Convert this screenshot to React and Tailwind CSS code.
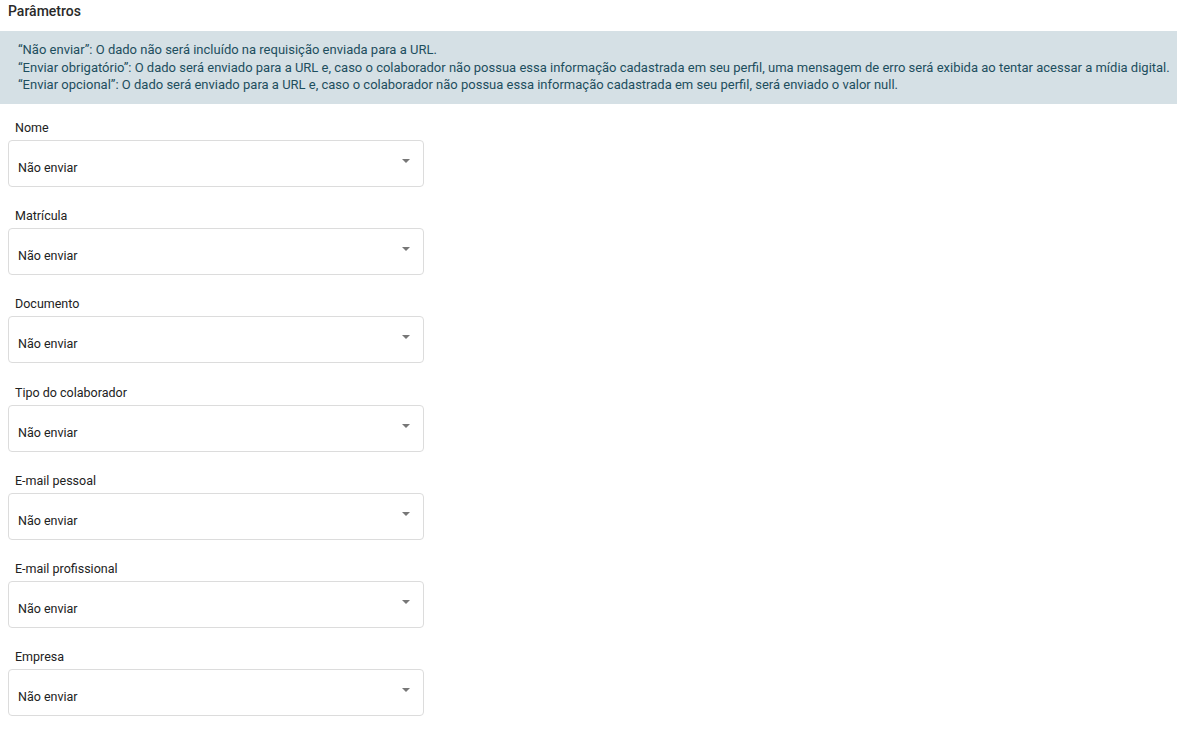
import React from "react";

const fields = [
  "Nome",
  "Matrícula",
  "Documento",
  "Tipo do colaborador",
  "E-mail pessoal",
  "E-mail profissional",
  "Empresa",
];

function Select() {
  return (
    <div className="relative w-[416px] h-[47px] ml-[8px] border border-[#dcdcdc] rounded-[4px] bg-white">
      <span className="absolute left-[9px] top-[18px] text-[12.5px] leading-[17px] text-[#222]">Não enviar</span>
      <svg className="absolute left-[393px] top-[18px]" width="8" height="4" viewBox="0 0 8 4">
        <path d="M0 0 L8 0 L4 4 Z" fill="#777" />
      </svg>
    </div>
  );
}

export default function App() {
  return (
    <div className="w-[1177px] bg-white" style={{ fontFamily: "Roboto, 'Liberation Sans', sans-serif" }}>
      <div className="pl-[8px] pt-[2px] h-[31px] text-[14px] leading-[18px] font-medium text-[#2a2a2a]">Parâmetros</div>
      <div className="bg-[#d5e0e5] h-[73px] pl-[18px] pt-[10px] text-[13px] leading-[17.5px] text-[#1d4e5e]">
        <div>“Não enviar”: O dado não será incluído na requisição enviada para a URL.</div>
        <div>“Enviar obrigatório”: O dado será enviado para a URL e, caso o colaborador não possua essa informação cadastrada em seu perfil, uma mensagem de erro será exibida ao tentar acessar a mídia digital.</div>
        <div>“Enviar opcional”: O dado será enviado para a URL e, caso o colaborador não possua essa informação cadastrada em seu perfil, será enviado o valor null.</div>
      </div>
      <div className="pt-[15px] flex flex-col gap-[20.2px]">
        {fields.map((f) => (
          <div key={f} className="flex flex-col gap-[4px]">
            <div className="pl-[15px] h-[17px] text-[12.5px] leading-[17px] text-[#222]">{f}</div>
            <Select />
          </div>
        ))}
      </div>
    </div>
  );
}
